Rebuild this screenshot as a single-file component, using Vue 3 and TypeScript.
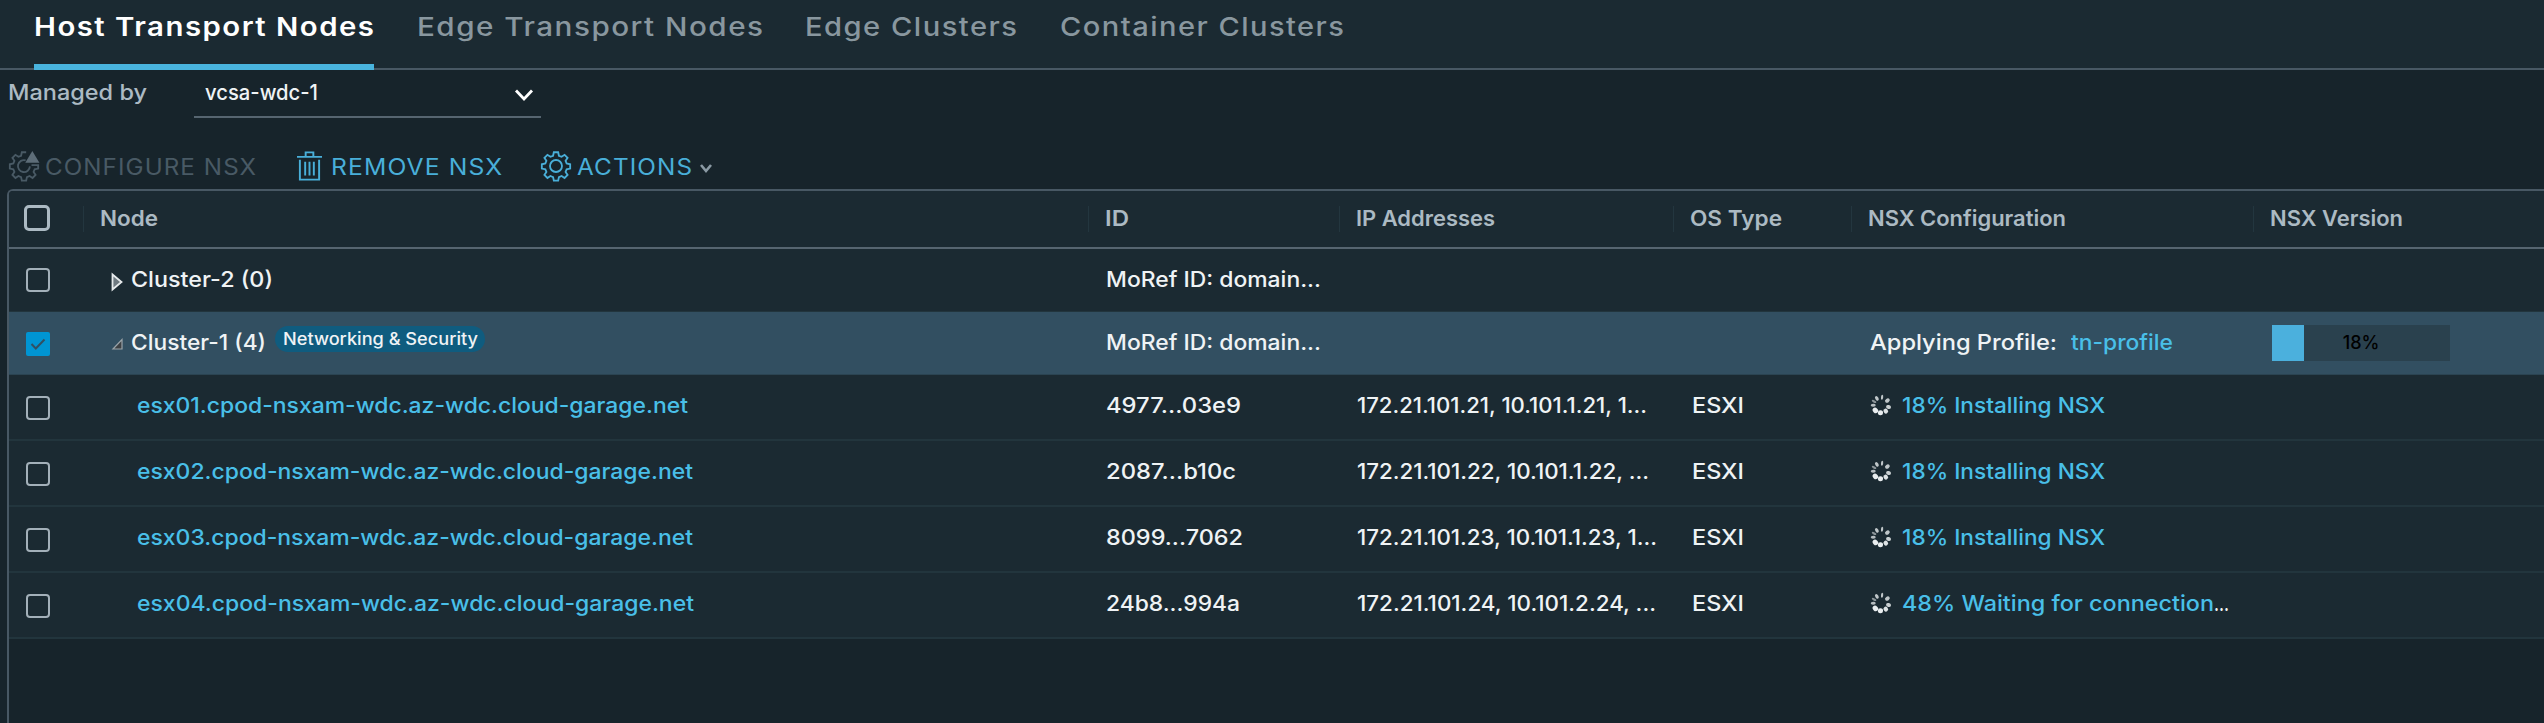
<script setup lang="ts">
import { ref, type ObjectDirective } from 'vue'

interface Label {
  text: string
  width: number
}
interface NodeRow {
  kind: 'cluster' | 'host'
  name: Label
  id: Label
  open?: boolean
  selected?: boolean
  ips?: Label
  status?: Label
  clipped?: boolean
}

// Widens a label's letterforms so that it fills the width given in pixels.
const vFit: ObjectDirective<HTMLElement, number> = {
  mounted(el, { value }) {
    const spacing = parseFloat(getComputedStyle(el).letterSpacing) || 0
    const natural = el.getBoundingClientRect().width - spacing
    el.style.width = `${value}px`
    el.style.transform = `scaleX(${value / natural})`
  },
}

const activeTab = ref(0)
const tabs: Label[] = [
  { text: 'Host Transport Nodes', width: 340 },
  { text: 'Edge Transport Nodes', width: 346 },
  { text: 'Edge Clusters', width: 212 },
  { text: 'Container Clusters', width: 284 },
]

const columns: Label[] = [
  { text: 'Node', width: 58 },
  { text: 'ID', width: 24 },
  { text: 'IP Addresses', width: 139 },
  { text: 'OS Type', width: 92 },
  { text: 'NSX Configuration', width: 198 },
  { text: 'NSX Version', width: 133 },
]

const progress = 18

const rows = ref<NodeRow[]>([
  { kind: 'cluster', name: { text: 'Cluster-2 (0)', width: 142 }, id: { text: 'MoRef ID: domain...', width: 215 } },
  { kind: 'cluster', name: { text: 'Cluster-1 (4)', width: 135 }, id: { text: 'MoRef ID: domain...', width: 215 }, open: true, selected: true },
  { kind: 'host', name: { text: 'esx01.cpod-nsxam-wdc.az-wdc.cloud-garage.net', width: 551 }, id: { text: '4977...03e9', width: 135 }, ips: { text: '172.21.101.21, 10.101.1.21, 1...', width: 290 }, status: { text: '18% Installing NSX', width: 203 } },
  { kind: 'host', name: { text: 'esx02.cpod-nsxam-wdc.az-wdc.cloud-garage.net', width: 556 }, id: { text: '2087...b10c', width: 130 }, ips: { text: '172.21.101.22, 10.101.1.22, ...', width: 292 }, status: { text: '18% Installing NSX', width: 203 } },
  { kind: 'host', name: { text: 'esx03.cpod-nsxam-wdc.az-wdc.cloud-garage.net', width: 556 }, id: { text: '8099...7062', width: 137 }, ips: { text: '172.21.101.23, 10.101.1.23, 1...', width: 300 }, status: { text: '18% Installing NSX', width: 203 } },
  { kind: 'host', name: { text: 'esx04.cpod-nsxam-wdc.az-wdc.cloud-garage.net', width: 557 }, id: { text: '24b8...994a', width: 134 }, ips: { text: '172.21.101.24, 10.101.2.24, ...', width: 299 }, status: { text: '48% Waiting for connection', width: 312 }, clipped: true },
])

const gear =
  'M15.4 1.5h5.2l.9 4.2 3.2 1.300 3.600-2.400 3.600 3.600-2.400 3.600 1.300 3.200 4.200.9v5.200l-4.200.9-1.300 3.200 2.400 3.600-3.600 3.600-3.600-2.400-3.200 1.300-.9 4.200h-5.200l-.9-4.200-3.200-1.300-3.600 2.400-3.600-3.600 2.400-3.600-1.300-3.200-4.200-.9v-5.200l4.200-.9 1.300-3.200-2.400-3.600 3.600-3.600 3.600 2.400 3.200-1.300z'
const badgeGear =
  'M20.600 1.500h-5.200l-.9 4.200-3.200 1.300-3.600-2.400-3.600 3.600 2.400 3.600-1.300 3.200-4.200.9v5.200l4.200.9 1.300 3.200-2.400 3.600 3.600 3.600 3.600-2.400 3.200 1.300.9 4.200h5.200l.9-4.200 3.200-1.300 3.600 2.400 3.600-3.600-2.400-3.600 1.300-3.200 4.200-.9V17H27'

const spokes = [
  { a: 8, r: 1.1, o: 0.8 }, { a: 55, r: 2, o: 0.8 }, { a: 105, r: 2, o: 0.85 },
  { a: 142, r: 2.2, o: 0.95 }, { a: 184, r: 2.6, o: 1 }, { a: 226, r: 3, o: 1 },
  { a: 268, r: 1.4, o: 0.75 }, { a: 297, r: 1.2, o: 0.55 }, { a: 328, r: 1.6, o: 0.8 },
]
</script>

<template>
  <div class="page">
    <nav class="tabs">
      <button v-for="(tab, i) in tabs" :key="tab.text" class="tab" :class="{ active: i === activeTab }" @click="activeTab = i">
        <span v-fit="tab.width" class="label">{{ tab.text }}</span>
      </button>
    </nav>

    <div class="filter">
      <div class="managed"><span v-fit="139" class="label">Managed by</span></div>
      <div class="select">
        <span v-fit="113" class="label">vcsa-wdc-1</span>
        <svg class="select-arrow" viewBox="0 0 20 12"><path d="M2 1.5 10 10 18 1.5" /></svg>
      </div>
    </div>

    <div class="toolbar">
      <button class="action configure" disabled>
        <svg class="icon" viewBox="0 0 36 36">
          <path :d="badgeGear" /><path d="M20 11.200a7.200 7.200 0 1 0 5.100 7.300" />
          <path class="solid" d="M28 0 36.500 14H19.500z" />
        </svg>
        <span v-fit="211" class="label">CONFIGURE NSX</span>
      </button>
      <button class="action remove">
        <svg class="trash" viewBox="0 0 26 31">
          <path d="M0 6h26M9 5V1.3h8V5M3 9v20.7h20V9M8.5 11v14.5M13 11v14.5M17.5 11v14.5" />
        </svg>
        <span v-fit="171" class="label">REMOVE NSX</span>
      </button>
      <button class="action menu">
        <svg class="icon" viewBox="0 0 36 36"><path :d="gear" /><circle cx="18" cy="18" r="7.200" /></svg>
        <span v-fit="115" class="label">ACTIONS</span>
        <svg class="menu-arrow" viewBox="0 0 14 10"><path d="M2 2 7 8 12 2" /></svg>
      </button>
    </div>

    <section class="table">
      <div class="row head">
        <div class="pick"><i class="box large"></i></div>
        <div v-for="col in columns" :key="col.text" class="th"><span v-fit="col.width" class="label">{{ col.text }}</span></div>
      </div>

      <div v-for="row in rows" :key="row.name.text" class="row" :class="[row.kind, { selected: row.selected }]">
        <div class="pick" @click="row.selected = !row.selected">
          <i class="box" :class="{ checked: row.selected }">
            <svg v-if="row.selected" viewBox="0 0 24 24"><path d="m5.500 12 4.300 4.500 8.700-9" /></svg>
          </i>
        </div>
        <div class="td node">
          <template v-if="row.kind === 'cluster'">
            <svg v-if="row.open" class="caret" viewBox="0 0 12 18"><path class="open" d="M11 3.500V13H2z" /></svg>
            <svg v-else class="caret" viewBox="0 0 12 18"><path class="closed" d="M1.500 1.500 10.500 9 1.500 16.500z" /></svg>
          </template>
          <span v-fit="row.name.width" class="label" :class="{ link: row.kind === 'host' }">{{ row.name.text }}</span>
          <span v-if="row.open" class="pill"><span v-fit="195" class="label">Networking &amp; Security</span></span>
        </div>
        <div class="td"><span v-fit="row.id.width" class="label">{{ row.id.text }}</span></div>
        <div class="td"><span v-if="row.ips" v-fit="row.ips.width" class="label">{{ row.ips.text }}</span></div>
        <div class="td os"><span v-if="row.kind === 'host'" v-fit="52" class="label">ESXI</span></div>
        <div class="td config">
          <template v-if="row.open">
            <span v-fit="187" class="label">Applying Profile:</span>
            <span v-fit="102" class="label link profile">tn-profile</span>
          </template>
          <template v-if="row.status">
            <svg class="spinner" viewBox="-11 -11 22 22">
              <ellipse v-for="s in spokes" :key="s.a" :transform="`rotate(${s.a})`" cx="0" cy="-7.800" :rx="s.r" ry="2.500" :opacity="s.o" />
            </svg>
            <span v-fit="row.status.width" class="label link">{{ row.status.text }}</span>
            <span v-if="row.clipped" v-fit="15" class="label">...</span>
          </template>
        </div>
        <div class="td">
          <div v-if="row.open" class="bar">
            <div class="fill" :style="{ width: progress + '%' }"></div>
            <span class="percent">{{ progress }}%</span>
          </div>
        </div>
      </div>
    </section>
  </div>
</template>

<style>
body {
  margin: 0;
  overflow: hidden;
  background: #17242b;
}
</style>

<style scoped>
.page {
  box-sizing: border-box;
  width: 2544px;
  height: 723px;
  overflow: hidden;
  display: flex;
  flex-direction: column;
  background: #17242b;
  color: #eff3f5;
  font-family: Inter, 'Open Sans', sans-serif;
  font-size: 21.5px;
  font-weight: 480;
}
button {
  padding: 0;
  border: 0;
  background: none;
  color: inherit;
  font: inherit;
}
svg {
  display: block;
  flex: none;
  overflow: visible;
  fill: none;
  stroke: currentColor;
}
.label {
  display: inline-block;
  flex: none;
  white-space: nowrap;
  line-height: 28px;
  text-align: left;
  transform-origin: 0 50%;
}
.link { color: #49bfe8; }

.tabs {
  flex: none;
  box-sizing: border-box;
  height: 70px;
  padding-left: 34px;
  display: flex;
  gap: 42.5px;
  background: #1b2a32;
  border-bottom: 2px solid #485864;
}
.tab {
  box-sizing: border-box;
  height: 70px;
  padding-bottom: 12px;
  border-bottom: 6px solid transparent;
  color: #89979f;
  font-size: 26px;
  font-weight: 500;
}
.tab .label { letter-spacing: 1.3px; }
.tab.active {
  color: #fff;
  font-weight: 600;
  border-bottom-color: #49b4de;
}

.filter {
  flex: none;
  height: 48px;
  padding-left: 8px;
  display: flex;
  align-items: stretch;
}
.managed {
  width: 186px;
  flex: none;
  padding-top: 8px;
  color: #acbac3;
}
.select {
  box-sizing: border-box;
  width: 347px;
  padding: 8px 7px 0 11px;
  display: flex;
  justify-content: space-between;
  border-bottom: 2px solid #566570;
}
.select-arrow {
  width: 20px;
  height: 12px;
  margin-top: 11px;
  stroke: #fff;
  stroke-width: 2.8;
}

.toolbar {
  flex: none;
  height: 71px;
  padding-left: 9px;
  display: flex;
  align-items: center;
}
.action {
  display: flex;
  align-items: center;
  height: 30px;
  margin-top: 24px;
  color: #49afd9;
  font-size: 22.5px;
  font-weight: 420;
}
.action .label { padding-top: 2px; letter-spacing: 1px; }
.configure { color: #495a65; width: 288px; }
.icon {
  width: 30px;
  height: 30px;
  margin-right: 6px;
  stroke-width: 2.2;
}
.solid { fill: #5d6d78; stroke: none; }
.remove { width: 244px; }
.trash {
  width: 25px;
  height: 30px;
  margin-right: 9px;
  stroke-width: 2;
}
.menu-arrow {
  width: 14px;
  height: 10px;
  margin: 4px 0 0 7px;
  stroke: #8b9aa4;
  stroke-width: 2.6;
}

.table {
  flex: 1;
  margin-left: 7px;
  border: 2px solid #485864;
  border-right: 0;
  border-bottom: 0;
  border-top-left-radius: 6px;
  overflow: hidden;
}
.row {
  box-sizing: border-box;
  display: grid;
  grid-template-columns: 74px 1005px 251px 334px 178px 402px 1fr;
  align-items: center;
  background: #1b2a32;
  border-bottom: 1px solid #22353d;
}
.row.head {
  height: 58px;
  border-bottom: 2px solid #566570;
  color: #acbac3;
  font-weight: 600;
}
.row.cluster { height: 62.75px; }
.row.host { height: 66px; border-bottom-width: 2px; }
.row.selected { background: #324f61; border-bottom-color: #2b4452; }
.pick { padding-left: 17px; }
.head .pick { padding-left: 15px; }
.box {
  box-sizing: border-box;
  display: block;
  width: 24px;
  height: 24px;
  border: 2px solid #a3b0b9;
  border-radius: 4px;
}
.head .box { width: 26px; height: 26px; border-width: 3px; border-color: #acbac3; border-radius: 5px; margin-top: -2px; }
.box.checked { background: #0095d3; border: 0; border-radius: 2px; margin-top: 3px; }
.box.checked svg { stroke: #324f61; stroke-width: 2; }
.host .box { margin-top: 3px; }
.th {
  height: 26px;
  padding-left: 16px;
  border-left: 1px solid #23363f;
  display: flex;
  align-items: center;
}
.th .label { line-height: 26px; padding-bottom: 2px; }
.td {
  height: 36px;
  padding-left: 18px;
  display: flex;
  align-items: center;
  padding-bottom: 2px;
}
.host .td { padding-bottom: 3px; }
.td.node { padding-left: 28px; }
.host .td.node { padding-left: 54px; }
.td.os { padding-left: 19px; }
.caret {
  width: 12px;
  height: 18px;
  margin: 6px 8px 0 0;
}
.closed { fill: #6f7a81; stroke: #e6eaec; stroke-width: 1.8; }
.open { fill: #3d4144; stroke: #9aa3a8; stroke-width: 1.2; }
.pill {
  box-sizing: border-box;
  width: 210px;
  height: 26px;
  margin: -6px 0 0 9px;
  padding-left: 8px;
  border-radius: 13px;
  background: #0f5c7f;
  display: flex;
  align-items: center;
  font-size: 17px;
  font-weight: 550;
}
.profile { margin-left: 14px; }
.td.config { padding-left: 19px; }
.spinner {
  width: 22px;
  height: 22px;
  margin-right: 10px;
  fill: #e9edef;
  stroke: none;
}
.bar {
  position: relative;
  width: 178px;
  height: 36px;
  margin: 2px 0 0 1px;
  background: #2a414e;
}
.fill { height: 100%; background: #4bb0dd; }
.percent {
  position: absolute;
  inset: 0;
  text-align: center;
  line-height: 36px;
  color: #000;
  font-size: 18px;
  font-weight: 500;
}
</style>
